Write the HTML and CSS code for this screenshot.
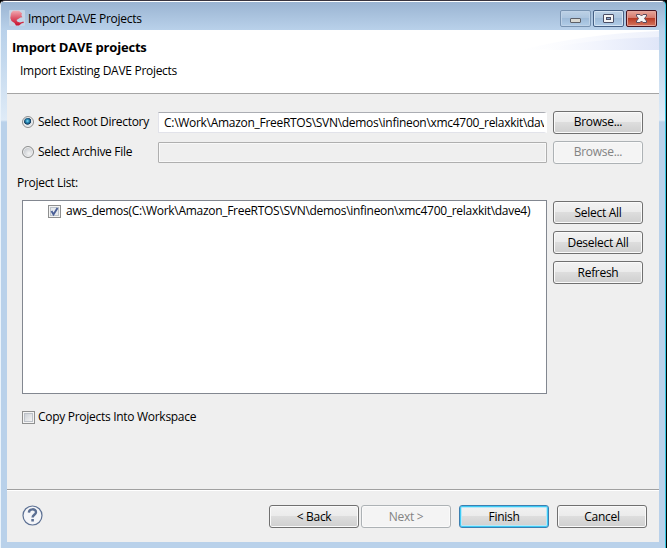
FILE: index.html
```
<!DOCTYPE html>
<html lang="en">
<head>
<meta charset="utf-8">
<title>Import DAVE Projects</title>
<link rel="stylesheet" href="styles.css">
</head>
<body>
<div class="window">
  <header class="titlebar">
    <svg class="app-icon" width="16" height="16" viewBox="0 0 16 16">
      <defs><linearGradient id="red" x1="0" y1="0" x2="0" y2="1"><stop offset="0" stop-color="#f0a8b0"/><stop offset=".5" stop-color="#dc5468"/><stop offset="1" stop-color="#c8102e"/></linearGradient></defs>
      <rect width="16" height="16" rx="1" fill="#c5d5e6"/>
      <path d="M4 .8h6l3 2.400-.6 2 1 2-1.800.2-1.600 1.200L7.500 10l1 1.800 2.500.7 3.500-1 .3 1.500-2 .3-2.800 2.200H7L5.500 13 2.500 11 1.300 8 2 3z" fill="url(#red)"/>
    </svg>
    <h1 class="title"><span class="text">Import DAVE Projects</span></h1>
    <div class="controls">
      <svg class="control" width="31" height="17" viewBox="0 0 31 17">
        <defs><linearGradient id="glass" x1="0" y1="0" x2="0" y2="1"><stop offset="0" stop-color="#bed2e6"/><stop offset=".48" stop-color="#acc5df"/><stop offset=".5" stop-color="#9ebbd8"/><stop offset="1" stop-color="#b3cee9"/></linearGradient></defs>
        <rect x=".5" y=".5" width="30" height="16" rx="1.5" fill="url(#glass)" stroke="#7893b1"/>
        <rect x="1.5" y="1.5" width="28" height="14" rx="1" fill="none" stroke="#bfd3e8"/>
        <rect x="10.500" y="8.500" width="10" height="4" rx=".5" fill="#d9d9d3" stroke="#5c6068"/>
      </svg>
      <svg class="control" width="31" height="17" viewBox="0 0 31 17">
        <rect x=".5" y=".5" width="30" height="16" rx="1.500" fill="url(#glass)" stroke="#455f83"/>
        <rect x="1.500" y="1.500" width="28" height="14" rx="1" fill="none" stroke="#d5e4f3"/>
        <rect x="10.500" y="4.500" width="10" height="8" rx=".5" fill="#f5f5f5" stroke="#4a4d64"/>
        <rect x="13.500" y="7.500" width="4" height="2" fill="#8aa6cd" stroke="#4a4d64"/>
      </svg>
      <svg class="control" width="31" height="17" viewBox="0 0 31 17">
        <defs><linearGradient id="close" x1="0" y1="0" x2="0" y2="1"><stop offset="0" stop-color="#e9a99e"/><stop offset=".47" stop-color="#d5796b"/><stop offset=".5" stop-color="#b83b25"/><stop offset="1" stop-color="#d77a62"/></linearGradient></defs>
        <rect x=".5" y=".5" width="30" height="16" rx="1.500" fill="url(#close)" stroke="#451422"/>
        <rect x="1.500" y="1.500" width="28" height="14" rx="1" fill="none" stroke="#e5a69c"/>
        <path d="M10.500 4.500h3.500l1.500 1.500 1.500-1.500h3.500v1.500l-2 2.500 2 2.500v1.500H17l-1.500-1.500-1.500 1.500h-3.500V11l2-2.500-2-2.500z" fill="#f5f5f5" stroke="#5b4a5c"/>
      </svg>
    </div>
  </header>
  <main class="client">
    <section class="banner">
      <svg class="swoosh" width="160" height="20" viewBox="0 0 160 20">
        <defs><linearGradient id="sw"><stop offset="0" stop-color="#fff"/><stop offset=".5" stop-color="#f1f4fd"/><stop offset="1" stop-color="#e0e6f8"/></linearGradient></defs>
        <path d="M22 20Q85 4 160 1V20z" fill="url(#sw)" opacity=".55"/>
        <path d="M40 20Q90 9 160 7V20z" fill="url(#sw)"/>
      </svg>
      <h2 class="heading"><span class="text">Import DAVE projects</span></h2>
      <p class="description"><span class="text">Import Existing DAVE Projects</span></p>
    </section>
    <section class="page">
      <div class="source">
        <span class="radio checked"></span><label class="source-label"><span class="text">Select Root Directory</span></label>
        <div class="field"><span class="text">C:\Work\Amazon_FreeRTOS\SVN\demos\infineon\xmc4700_relaxkit\dave4</span></div>
        <button class="button"><span class="text">Browse...</span></button>
      </div>
      <div class="source">
        <span class="radio"></span><label class="source-label"><span class="text">Select Archive File</span></label>
        <div class="field disabled"></div>
        <button class="button" disabled><span class="text">Browse...</span></button>
      </div>
      <div class="list-label"><span class="text">Project List:</span></div>
      <div class="projects">
        <div class="list">
          <div class="item">
            <svg class="check" width="13" height="13" viewBox="0 0 13 13"><rect x=".5" y=".5" width="12" height="12" fill="#f4f4f4" stroke="#8e8f8f"/><rect x="2.500" y="2.500" width="8" height="8" fill="#e6e9ed" stroke="#bcc3ca"/><path d="M3.500 6l2 3.500L9.500 3" fill="none" stroke="#4a5f97" stroke-width="1.900"/></svg>
            <span class="text">aws_demos(C:\Work\Amazon_FreeRTOS\SVN\demos\infineon\xmc4700_relaxkit\dave4)</span>
          </div>
        </div>
        <div class="actions">
          <button class="button"><span class="text">Select All</span></button>
          <button class="button"><span class="text">Deselect All</span></button>
          <button class="button"><span class="text">Refresh</span></button>
        </div>
      </div>
      <div class="copy">
        <svg class="check" width="13" height="13" viewBox="0 0 13 13"><defs><linearGradient id="box" x1="0" y1="0" x2="1" y2="1"><stop offset="0" stop-color="#cbcfd5"/><stop offset="1" stop-color="#f6f6f6"/></linearGradient></defs><rect x=".5" y=".5" width="12" height="12" fill="#f4f4f4" stroke="#8e8f8f"/><rect x="2.500" y="2.500" width="8" height="8" fill="url(#box)" stroke="#bcc1c8"/></svg>
        <span class="text">Copy Projects Into Workspace</span>
      </div>
    </section>
    <footer class="footer">
      <svg class="help" width="21" height="21" viewBox="0 0 21 21">
        <circle cx="10.500" cy="10.500" r="9.500" fill="#f4f5f8" stroke="#5d7194" stroke-width="1.200"/>
        <path d="M6.900 7.600C7 3.300 14 3.300 14 7.200c0 2.500-3.400 2.700-3.400 5.200" fill="none" stroke="#5b6f93" stroke-width="2.400"/>
        <rect x="9.300" y="14" width="2.600" height="2.500" fill="#5b6f93"/>
      </svg>
      <div class="nav">
        <button class="button"><span class="text">&lt; Back</span></button>
        <button class="button" disabled><span class="text">Next &gt;</span></button>
      </div>
      <button class="button default"><span class="text">Finish</span></button>
      <button class="button"><span class="text">Cancel</span></button>
    </footer>
  </main>
</div>
</body>
</html>
```
FILE: styles.css
```
* { box-sizing: border-box; }
body {
  margin: 0;
  background: #000;
  font: 12px/16px "Open Sans", "Noto Sans", sans-serif;
  letter-spacing: -0.29px;
  color: #000;
}
h1, h2, p { margin: 0; font-size: 12px; font-weight: 400; }
.text { display: inline-block; white-space: nowrap; }
.window {
  width: 666px;
  height: 548px;
  padding: 0 6px;
  border: solid;
  border-width: 1px 1px 0 1px;
  border-color: #38343f #35c6e0 #b9d1ea #eaf3fb;
  border-radius: 5px 5px 0 0;
  background: linear-gradient(#fff 0 1px, #9ab4d2 1px, #b9d1ea 29px, #c4d9ee 60px, #dfebf7 119px, #b9d1ea 121px);
}
.titlebar { display: flex; align-items: flex-start; height: 29px; padding: 9px 2px 0; }
.app-icon { margin-right: 3px; }
.title { flex: 1; line-height: 18px; }
.controls { display: flex; gap: 2px; }
.control { display: block; }
.client { display: flex; flex-direction: column; width: 652px; height: 512px; background: #efefef; }
.banner {
  display: grid;
  grid-template-columns: 1fr 160px;
  grid-template-rows: 28px 36px;
  height: 64px;
  background: #fff;
  border-bottom: 1px solid #a5a5a5;
}
.swoosh { grid-column: 2; grid-row: 1; }
.heading { grid-column: 1; grid-row: 1; padding: 9px 0 0 5px; font-size: 13px; font-weight: 700; letter-spacing: -0.2px; }
.description { grid-column: 1; padding: 5px 0 0 13px; }
.page { flex: 1; padding: 16px 16px 0 10px; }
.source { display: flex; align-items: center; height: 24px; margin-bottom: 6px; padding-left: 5px; }
.radio {
  flex: none;
  width: 12px;
  height: 12px;
  border: 1px solid #8e8f8f;
  border-radius: 50%;
  background: radial-gradient(circle at 60% 65%, #f4f4f4, #c5c9ce 70%);
  box-shadow: inset 0 0 0 1px #f0f0f0;
}
.radio.checked { background: radial-gradient(circle at 45% 40%, #8fe0f5 0, #2b91bd 1.500px, #12395c 3.300px, #dfe3e7 4px); }
.source-label { width: 124px; padding-left: 4px; flex: none; }
.field {
  flex: none;
  width: 389px;
  height: 21px;
  margin: 0 6px 0 0;
  padding: 2px 0 0 5px;
  overflow: hidden;
  border: 1px solid #e2e3ea;
  border-top-color: #abadb3;
  border-right: 3px solid #fff;
  background: #fff;
}
.field.disabled { padding: 0; border: 1px solid #afafaf; border-radius: 1px; background: #efefef; box-shadow: inset 0 0 0 1px #f8f8f8; }
.button {
  flex: none;
  width: 90px;
  height: 23px;
  padding: 0;
  border: 1px solid #707070;
  border-radius: 3px;
  background: linear-gradient(#f2f2f2, #ebebeb 48%, #dddddd 50%, #cfcfcf);
  box-shadow: inset 0 0 0 1px #fafafa;
  font: inherit;
  letter-spacing: inherit;
  line-height: 16px;
  text-align: center;
  color: #000;
}
.button:disabled { border-color: #adb2b5; background: #f4f4f4; color: #838383; }
.button.default { border-color: #3c7fb1; box-shadow: inset 0 0 0 1px #3ecbf5, inset 0 0 0 2px #b8e8f8; }
.list-label { padding-top: 5px; height: 30px; }
.projects { display: flex; gap: 6px; padding-left: 5px; }
.list { width: 525px; height: 194px; padding: 2px 0 0 25px; border: 1px solid #828790; background: #fff; }
.item, .copy { display: flex; align-items: center; gap: 5px; }
.check { flex: none; }
.actions { display: flex; flex-direction: column; gap: 7px; padding-top: 1px; }
.copy { margin: 15px 0 0 5px; gap: 3px; }
.footer {
  display: flex;
  align-items: flex-start;
  height: 53px;
  padding: 15px 12px 0 15px;
  border-top: 1px solid #a0a0a0;
  box-shadow: inset 0 1px 0 #fff;
}
.help { margin-right: auto; }
.nav { display: flex; gap: 2px; }
.footer .button.default { margin: 0 8px; }
```
